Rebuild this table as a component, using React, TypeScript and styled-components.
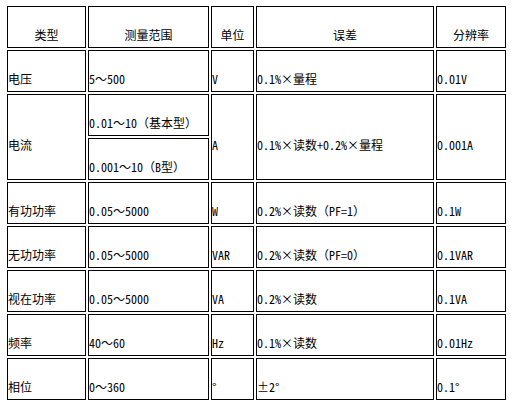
import React from "react";
import styled, { createGlobalStyle } from "styled-components";

const GlobalStyle = createGlobalStyle`
  html, body {
    margin: 0;
    padding: 0;
    background: #fff;
  }
`;

const Page = styled.div`
  padding: 6px 0 0 7px;
`;

const Table = styled.div`
  display: grid;
  grid-template-columns: 79px 121px 43px 178px 70px;
  grid-auto-rows: 42px;
  gap: 2px;
  font-family: "Noto Sans Mono CJK SC", "Noto Sans CJK SC", "Liberation Mono", monospace;
  font-size: 12px;
  color: #000;
`;

const Cell = styled.div<{ $span?: number; $head?: boolean }>`
  grid-row: span ${(p) => p.$span || 1};
  box-sizing: border-box;
  border: 1px solid #000;
  background: #fff;
  padding-top: 16px;
  display: flex;
  align-items: center;
  justify-content: ${(p) => (p.$head ? "center" : "flex-start")};
  line-height: 16px;
  white-space: nowrap;
  overflow: hidden;
`;

const headers = ["类型", "测量范围", "单位", "误差", "分辨率"];

const rows = [
  ["有功功率", "0.05～5000", "W", "0.2%×读数（PF=1）", "0.1W"],
  ["无功功率", "0.05～5000", "VAR", "0.2%×读数（PF=0）", "0.1VAR"],
  ["视在功率", "0.05～5000", "VA", "0.2%×读数", "0.1VA"],
  ["频率", "40～60", "Hz", "0.1%×读数", "0.01Hz"],
  ["相位", "0～360", "°", "±2°", "0.1°"],
];

const App = () => {
  return (
    <Page>
      <GlobalStyle />
      <Table>
        {headers.map((h) => (
          <Cell key={h} $head>
            {h}
          </Cell>
        ))}

        <Cell>电压</Cell>
        <Cell>5～500</Cell>
        <Cell>V</Cell>
        <Cell>0.1%×量程</Cell>
        <Cell>0.01V</Cell>

        <Cell $span={2}>电流</Cell>
        <Cell>0.01～10（基本型）</Cell>
        <Cell $span={2}>A</Cell>
        <Cell $span={2}>0.1%×读数+0.2%×量程</Cell>
        <Cell $span={2}>0.001A</Cell>
        <Cell>0.001～10（B型）</Cell>

        {rows.map((r) =>
          r.map((c, i) => <Cell key={r[0] + i}>{c}</Cell>)
        )}
      </Table>
    </Page>
  );
};

export default App;
